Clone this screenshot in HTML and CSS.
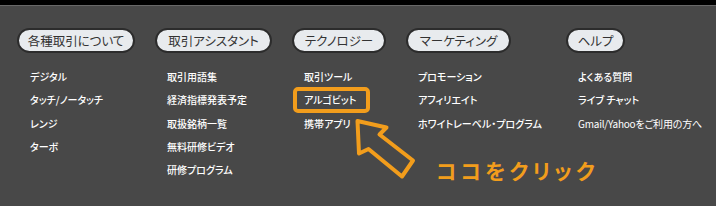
FILE: index.html
```html
<!DOCTYPE html>
<html lang="ja">
<head>
<meta charset="utf-8">
<title>Menu</title>
<link rel="stylesheet" href="styles.css">
</head>
<body>
<div class="page">
  <div class="topbar"></div>
  <nav class="menu">
    <div class="col col-1">
      <div class="pill pill-1">各種取引について</div>
      <ul class="links">
        <li>デジタル</li>
        <li>タッチ/ノータッチ</li>
        <li>レンジ</li>
        <li>ターボ</li>
      </ul>
    </div>
    <div class="col col-2">
      <div class="pill pill-2">取引アシスタント</div>
      <ul class="links">
        <li>取引用語集</li>
        <li>経済指標発表予定</li>
        <li>取扱銘柄一覧</li>
        <li>無料研修ビデオ</li>
        <li>研修プログラム</li>
      </ul>
    </div>
    <div class="col col-3">
      <div class="pill pill-3">テクノロジー</div>
      <ul class="links">
        <li>取引ツール</li>
        <li>アルゴビット</li>
        <li>携帯アプリ</li>
      </ul>
    </div>
    <div class="col col-4">
      <div class="pill pill-4">マーケティング</div>
      <ul class="links">
        <li>プロモーション</li>
        <li>アフィリエイト</li>
        <li>ホワイトレーベル・プログラム</li>
      </ul>
    </div>
    <div class="col col-5">
      <div class="pill pill-5">ヘルプ</div>
      <ul class="links">
        <li>よくある質問</li>
        <li>ライブ チャット</li>
        <li class="latin">Gmail/Yahooをご利用の方へ</li>
      </ul>
    </div>
  </nav>
  <div class="highlight"></div>
  <svg class="arrow" width="716" height="206" viewBox="0 0 716 206">
    <polygon points="357.5,121 386.5,127.5 379.5,134.5 413,160.5 402,176.5 368.5,149 359,153.5" fill="none" stroke="#f29d1c" stroke-width="4" stroke-linejoin="round"/>
  </svg>
  <div class="callout">ココをクリック</div>
</div>
</body>
</html>
```
FILE: styles.css
```css
html, body {
  margin: 0;
  padding: 0;
  background: #484848;
}
.page {
  position: relative;
  width: 716px;
  height: 206px;
  overflow: hidden;
  background: #484848;
  font-family: "Noto Sans CJK JP", "Noto Sans", sans-serif;
  font-feature-settings: "palt";
}
.topbar {
  height: 5px;
  background: #000;
  border-bottom: 1px solid #686868;
}
.menu {
  display: flex;
  gap: 20px;
  padding: 22px 0 0 17px;
}
.col-1 { width: 118px; }
.col-2 { width: 117px; }
.col-3 { width: 94px; }
.col-4 { width: 140px; }
.col-5 { width: 140px; }
.pill {
  box-sizing: border-box;
  height: 25px;
  border: 2px solid #2c2c2c;
  border-radius: 13px;
  background: #e8ebee;
  color: #333;
  font-size: 12.5px;
  display: flex;
  align-items: center;
  justify-content: center;
  white-space: nowrap;
}
.pill-1 { width: 118px; }
.pill-2 { width: 117px; }
.pill-3 { width: 94px; }
.pill-4 { width: 105px; }
.pill-5 { width: 59px; }
.links {
  list-style: none;
  margin: 12px 0 0 0;
  padding: 0 0 0 12px;
  color: #fff;
  font-size: 10px;
  font-weight: 500;
  line-height: 23.3px;
  white-space: nowrap;
}
.col-1 .links { padding-left: 13px; }
.links .latin { font-weight: 400; letter-spacing: -0.2px; }
.highlight {
  position: absolute;
  left: 293px;
  top: 87px;
  width: 77px;
  height: 26px;
  box-sizing: border-box;
  border: 4px solid #f29d1c;
  border-radius: 5px;
}
.arrow {
  position: absolute;
  left: 0;
  top: 0;
}
.callout {
  position: absolute;
  left: 436px;
  top: 155px;
  color: #f29d1c;
  font-size: 21px;
  font-weight: 700;
  letter-spacing: 4px;
  line-height: 30px;
  white-space: nowrap;
}
```
